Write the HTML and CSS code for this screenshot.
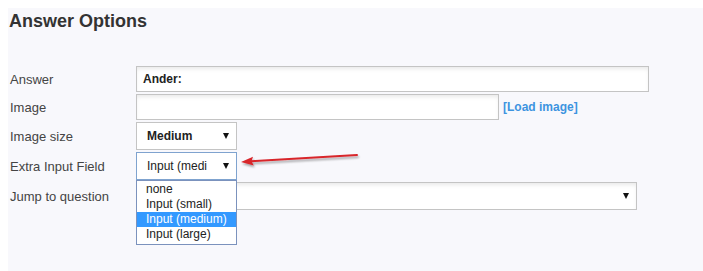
FILE: index.html
```html
<!DOCTYPE html>
<html lang="en">
<head>
  <meta charset="UTF-8" />
  <title>Answer Options</title>
  <link rel="stylesheet" href="styles.css">
</head>
<body>
  <div class="panel">
    <h2 class="title">Answer Options</h2>

    <div class="form">
      <div class="row">
        <label>Answer</label>
        <div class="field input answer">Ander:</div>
      </div>

      <div class="row">
        <label>Image</label>
        <div class="field input image"></div>
        <a class="load" href="#">[Load image]</a>
      </div>

      <div class="row">
        <label>Image size</label>
        <div class="field select small bold">
          <span class="value">Medium</span>
          <span class="caret"></span>
        </div>
      </div>

      <div class="row">
        <label>Extra Input Field</label>
        <div class="dropwrap">
          <div class="field select small focus">
            <span class="value">Input (medi</span>
            <span class="caret"></span>
          </div>
          <ul class="droplist">
            <li>none</li>
            <li>Input (small)</li>
            <li class="active">Input (medium)</li>
            <li>Input (large)</li>
          </ul>
        </div>
        <!-- red annotation arrow -->
        <svg class="arrow" width="130" height="24" viewBox="0 0 130 24">
          <defs>
            <filter id="soft" x="-10%" y="-50%" width="120%" height="200%">
              <feGaussianBlur in="SourceAlpha" stdDeviation="1.2" />
              <feOffset dx="1" dy="2" result="b" />
              <feComponentTransfer><feFuncA type="linear" slope="0.35" /></feComponentTransfer>
              <feMerge><feMergeNode /><feMergeNode in="SourceGraphic" /></feMerge>
            </filter>
          </defs>
          <g filter="url(#soft)">
            <path d="M14 9.2 L120 3" stroke="#d8262c" stroke-width="2" stroke-linecap="round" fill="none" />
            <path d="M4 10 L16 4.8 L14.5 9.2 L16.8 13.6 Z" fill="#d8262c" />
          </g>
        </svg>
      </div>

      <div class="row">
        <label>Jump to question</label>
        <div class="field select jump">
          <span class="value"></span>
          <span class="caret"></span>
        </div>
      </div>
    </div>
  </div>
</body>
</html>
```

FILE: styles.css
```css
body {
  margin: 8px 0 0 8px;
  background: #fff;
  font-family: "Liberation Sans", Arial, sans-serif;
}

.panel {
  background: #f8f8fc;
  height: 263px;
  padding: 2px 0 0 1px;
  box-sizing: border-box;
}

.title {
  margin: 0;
  font-size: 18px;
  line-height: 22px;
  font-weight: bold;
  color: #333;
}

.form {
  margin-top: 34px;
  padding-left: 1px;
  display: flex;
  flex-direction: column;
  gap: 2px;
}

.row {
  display: flex;
  align-items: center;
  position: relative;
}

.row label {
  width: 126px;
  font-size: 13px;
  color: #444;
}

.field {
  box-sizing: border-box;
  background: #fff;
  border: 1px solid #c4c4c4;
  font-size: 12px;
  color: #222;
  box-shadow: inset 0 3px 4px -1px rgba(0,0,0,0.09);
}

.input {
  height: 26px;
  line-height: 24px;
  padding: 0 6px;
  font-weight: bold;
}

.answer { width: 513px; }
.image  { width: 363px; }

.load {
  margin-left: 4px;
  font-size: 12px;
  font-weight: bold;
  color: #3d94e0;
  text-decoration: none;
}

.select {
  height: 28px;
  display: flex;
  align-items: center;
  padding: 0 7px 0 10px;
  box-shadow: none;
}

.select .value {
  flex: 1;
  white-space: nowrap;
}

.select.bold .value { font-weight: bold; }

.small { width: 101px; }

.jump {
  width: 501px;
  box-shadow: inset 0 3px 4px -1px rgba(0,0,0,0.09);
}

.caret {
  width: 0;
  height: 0;
  border-left: 3.5px solid transparent;
  border-right: 3.5px solid transparent;
  border-top: 6px solid #111;
}

.focus {
  border-color: #7fa3cf;
}

.dropwrap {
  position: relative;
}

.droplist {
  position: absolute;
  top: 28px;
  left: 0;
  z-index: 5;
  width: 101px;
  box-sizing: border-box;
  margin: 0;
  padding: 1px 0 2px;
  list-style: none;
  background: #fff;
  border: 1px solid #7b92bd;
  font-size: 12px;
  color: #222;
}

.droplist li {
  height: 15px;
  line-height: 15px;
  padding-left: 9px;
}

.droplist li.active {
  background: #3399ff;
  color: #fff;
}

.arrow {
  position: absolute;
  left: 227px;
  top: 0;
}
```
